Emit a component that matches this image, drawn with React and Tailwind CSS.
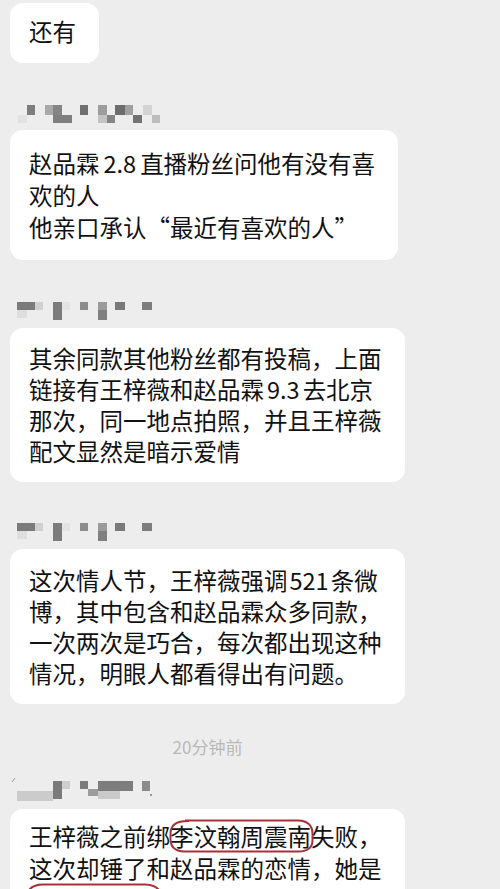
const nameOne = [
  [8, 13, 9, 8, "#e2e2e2"],
  [17, 3, 8, 10, "#7d7d7d"],
  [35, 3, 8, 10, "#a9a9a9"],
  [43, 3, 9, 10, "#858585"],
  [43, 13, 19, 8, "#7f7f7f"],
  [70, 3, 8, 10, "#707070"],
  [88, 3, 9, 10, "#9d9d9d"],
  [88, 13, 9, 8, "#c3c3c3"],
  [97, 13, 8, 8, "#858585"],
  [105, 3, 10, 10, "#6d6d6d"],
  [115, 3, 8, 10, "#a0a0a0"],
  [123, 13, 9, 8, "#737373"],
  [133, 3, 9, 10, "#d3d3d3"],
  [142, 13, 8, 8, "#bdbdbd"],
];

const nameTwo = [
  [7, 10, 10, 8, "#dedede"],
  [7, 2, 18, 8, "#7b7b7b"],
  [25, 2, 8, 8, "#d0d0d0"],
  [43, 2, 9, 18, "#7c7c7c"],
  [52, 2, 8, 8, "#e3e3e3"],
  [70, 2, 8, 8, "#8c8c8c"],
  [88, 2, 9, 8, "#9a9a9a"],
  [88, 10, 9, 10, "#808080"],
  [105, 2, 10, 8, "#7a7a7a"],
  [132, 2, 10, 8, "#7d7d7d"],
];

const nameFive = [
  [7, 14, 36, 10, "#cbcbcb"],
  [43, 4, 9, 18, "#7a7a7a"],
  [52, 4, 8, 8, "#cfcfcf"],
  [70, 4, 8, 8, "#7a7a7a"],
  [78, 12, 10, 7, "#9c9c9c"],
  [88, 14, 22, 8, "#cacaca"],
  [88, 4, 35, 10, "#7d7d7d"],
  [132, 4, 8, 10, "#8a8a8a"],
  [140, 17, 2, 2, "#999999"],
];

// pixelated sender name
function Mosaic({ blocks, height, slash }) {
  return (
    <svg width="160" height={height} className="block">
      {slash && <line x1="2" y1="5" x2="5" y2="1" stroke="#9a9a9a" strokeWidth="1" />}
      {blocks.map(([x, y, w, h, fill], i) => (
        <rect key={i} x={x} y={y} width={w} height={h} fill={fill} />
      ))}
    </svg>
  );
}

function Bubble({ className, children }) {
  return (
    <div
      className={`w-fit rounded-[13px] bg-white pl-[19px] pr-[23px] text-[23.5px] text-[#111111] whitespace-nowrap ${className}`}
    >
      {children}
    </div>
  );
}

function Ring({ w, h, left, top, full = true }) {
  return (
    <svg
      width={w}
      height={h}
      className="absolute pointer-events-none"
      style={{ left, top }}
    >
      {full ? (
        <path
          d={`M16 1.5 L${w - 16} 1.5 Q${w - 1.5} 2 ${w - 1.5} 15 L${w - 1.5} ${h - 12} Q${w - 2} ${h - 1.5} ${w - 16} ${h - 1.5} L15 ${h - 1.5} Q1.5 ${h - 2} 1.5 ${h - 14} L1.5 14 Q2 1.5 20 2`}
          fill="none"
          stroke="#a8303a"
          strokeWidth="2"
        />
      ) : (
        <path
          d={`M1.5 ${h - 10} L1.5 16 Q2 1.5 18 1.5 L${w - 18} 1.5 Q${w - 1.5} 2 ${w - 1.5} 16 L${w - 1.5} ${h - 10}`}
          fill="none"
          stroke="#a8303a"
          strokeWidth="2"
        />
      )}
    </svg>
  );
}

export default function App() {
  return (
    <div className="h-[889px] overflow-hidden bg-[#ededed] font-['Noto_Sans_CJK_SC',sans-serif]">
      <div className="flex flex-col items-start px-[10px]">
        <Bubble className="mt-[3px] pt-[12px] pb-[16px] leading-[32px]">还有</Bubble>

        <div className="mt-[39px] flex flex-col">
          <Mosaic blocks={nameOne} height={22} />
          <Bubble className="mt-[6px] pt-[17px] pb-[17px] leading-[32px]">
            <div>
              赵品霖<span className="px-[4px]">2.8</span>直播粉丝问他有没有喜
            </div>
            <div>欢的人</div>
            <div>他亲口承认“最近有喜欢的人”</div>
          </Bubble>
        </div>

        <div className="mt-[40px] flex flex-col">
          <Mosaic blocks={nameTwo} height={22} />
          <Bubble className="mt-[6px] pt-[15px] pb-[15px] leading-[31px]">
            <div>其余同款其他粉丝都有投稿，上面</div>
            <div>
              链接有王梓薇和赵品霖<span className="px-[3px]">9.3</span>去北京
            </div>
            <div>那次，同一地点拍照，并且王梓薇</div>
            <div>配文显然是暗示爱情</div>
          </Bubble>
        </div>

        <div className="mt-[39px] flex flex-col">
          <Mosaic blocks={nameTwo} height={22} />
          <Bubble className="mt-[6px] pt-[16px] pb-[15px] leading-[31px]">
            <div>
              这次情人节，王梓薇强调<span className="px-[2px]">521</span>条微
            </div>
            <div>博，其中包含和赵品霖众多同款，</div>
            <div>一次两次是巧合，每次都出现这种</div>
            <div>情况，明眼人都看得出有问题。</div>
          </Bubble>
        </div>

        <div className="mt-[32px] h-[22px] w-[395px] text-center text-[17px] leading-[22px] text-[#b9b9b9]">
          20分钟前
        </div>

        <div className="mt-[19px] flex flex-col">
          <Mosaic blocks={nameFive} height={24} slash />
          <Bubble className="mt-[8px] pt-[11px] pb-[16px] leading-[32px]">
            <div>
              王梓薇之前绑
              <span className="relative inline-block">
                李汶翰周震南
                <Ring w={145} h={34} left={-1} top={-1} />
              </span>
              失败，
            </div>
            <div>这次却锤了和赵品霖的恋情，她是</div>
            <div className="relative h-[32px]">
              <Ring w={138} h={34} left={-4} top={-1} full={false} />
            </div>
          </Bubble>
        </div>
      </div>
    </div>
  );
}
